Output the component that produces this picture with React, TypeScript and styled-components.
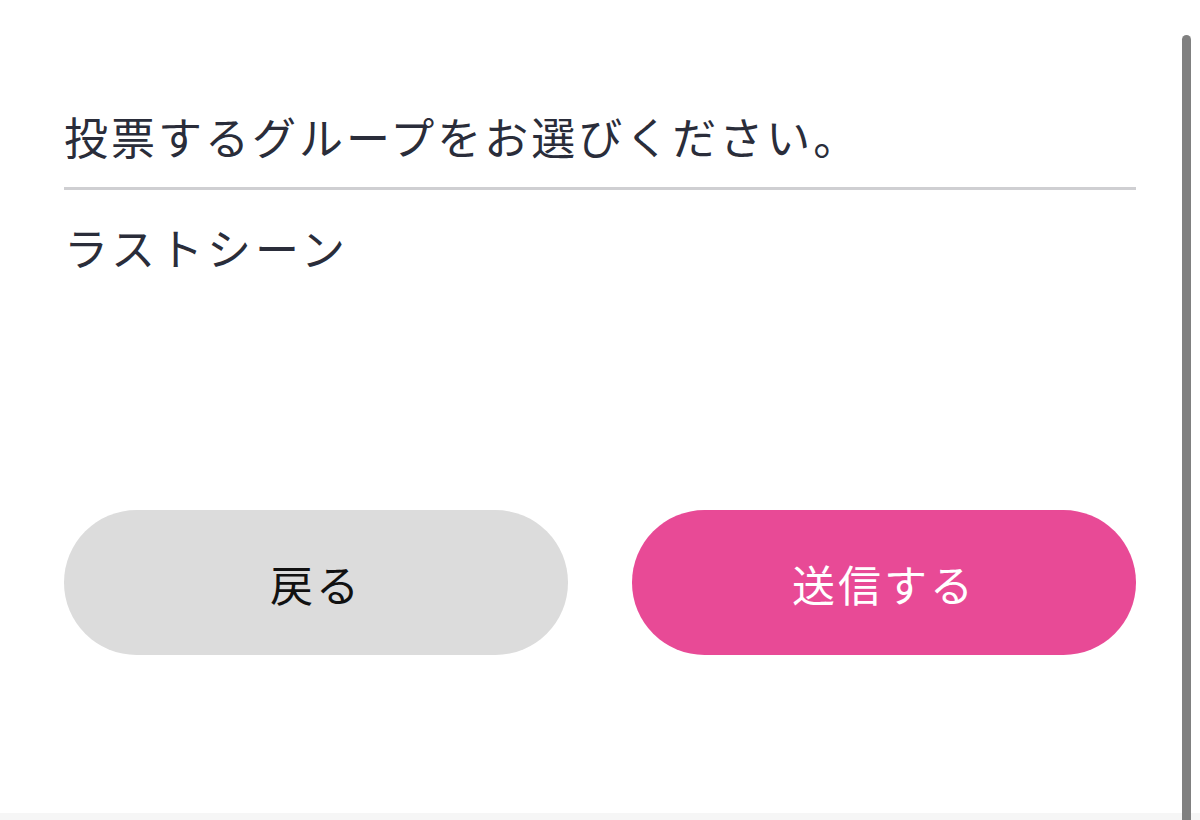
import React from "react";
import styled, { createGlobalStyle } from "styled-components";

const GlobalStyle = createGlobalStyle`
  html, body {
    margin: 0;
    padding: 0;
    background: #ffffff;
  }
  body {
    font-family: "Noto Sans CJK JP", "Noto Sans", sans-serif;
    overflow: hidden;
  }
`;

const Screen = styled.div`
  position: relative;
  width: 1200px;
  height: 820px;
  background: #ffffff;
  overflow: hidden;
`;

const Form = styled.div`
  display: flex;
  flex-direction: column;
  padding: 106px 64px 0;
`;

const Question = styled.h2`
  margin: 0;
  padding-bottom: 21px;
  border-bottom: 3px solid #cfcfd2;
  font-size: 44px;
  font-weight: 400;
  line-height: 60px;
  letter-spacing: 3px;
  color: #2a2d3a;
`;

const Choice = styled.p`
  margin: 27px 0 0;
  font-size: 44px;
  font-weight: 400;
  line-height: 60px;
  letter-spacing: 4px;
  color: #2a2d3a;
`;

const Actions = styled.div`
  display: grid;
  grid-template-columns: 1fr 1fr;
  gap: 64px;
  margin-top: 233px;
`;

const PillButton = styled.button<{ $primary?: boolean }>`
  height: 145px;
  border: none;
  border-radius: 999px;
  font-family: inherit;
  font-size: 43px;
  font-weight: 400;
  letter-spacing: 3px;
  cursor: pointer;
  background: ${(p) => (p.$primary ? "#e84a96" : "#dcdcdc")};
  color: ${(p) => (p.$primary ? "#ffffff" : "#111111")};
`;

const Scrollbar = styled.div`
  position: absolute;
  top: 35px;
  right: 9px;
  width: 9px;
  bottom: 0;
  border-radius: 5px 5px 0 0;
  background: #808080;
`;

const BottomEdge = styled.div`
  position: absolute;
  left: 0;
  right: 0;
  bottom: 0;
  height: 7px;
  background: #f6f6f6;
`;

export default function App() {
  return (
    <Screen>
      <GlobalStyle />
      <Form>
        <Question>投票するグループをお選びください。</Question>
        <Choice>ラストシーン</Choice>
        <Actions>
          <PillButton>戻る</PillButton>
          <PillButton $primary>送信する</PillButton>
        </Actions>
      </Form>
      <BottomEdge />
      <Scrollbar />
    </Screen>
  );
}
